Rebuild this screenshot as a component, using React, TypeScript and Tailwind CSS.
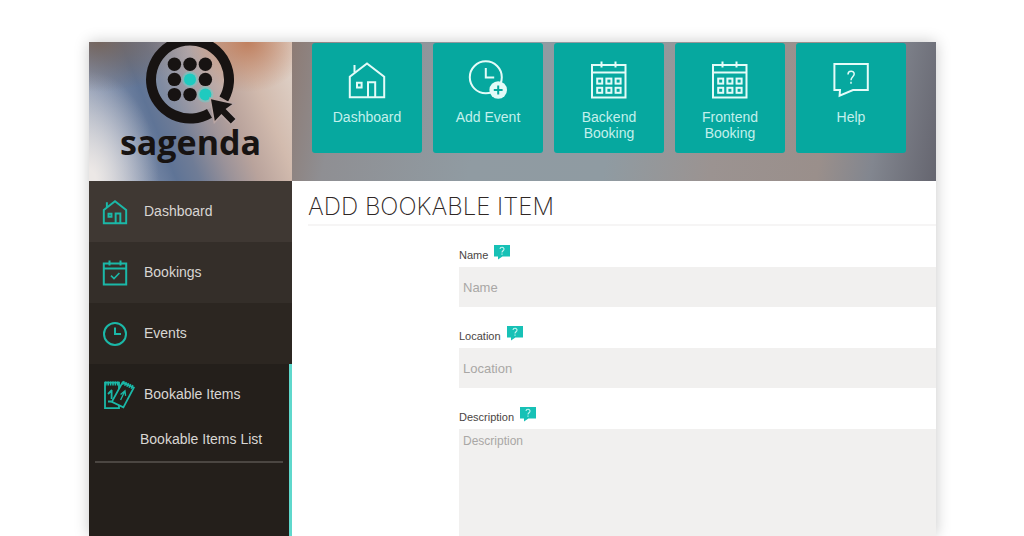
import type { ReactNode } from "react";

function HouseIcon({ className }: { className: string }) {
  return (
    <svg viewBox="0 0 40 40" className={className} fill="none" stroke="currentColor" aria-hidden="true">
      <path d="M2.8 37.2V16.8L20 3.4l17.2 13.4v20.4z" />
      <path d="M7.5 12.5V5" />
      <path d="M21 37V22.2h7.2V37" />
      <path d="M10 22.8h4.6v4.6H10z" />
    </svg>
  );
}

function AddEventIcon({ className }: { className: string }) {
  return (
    <svg viewBox="0 0 40 40" className={className} fill="none" stroke="currentColor" aria-hidden="true">
      <circle cx="17.8" cy="17.3" r="16" />
      <path d="M17.8 8v9.4h8.4" />
      <circle cx="30.2" cy="30" r="8.8" fill="currentColor" stroke="none" />
      <path d="M30.2 25.6v8.8M25.8 30h8.8" stroke="#08a69d" />
    </svg>
  );
}

function CalendarIcon({ className }: { className: string }) {
  return (
    <svg viewBox="0 0 40 40" className={className} fill="none" stroke="currentColor" aria-hidden="true">
      <path d="M3 5h33.5v32.5H3z" />
      <path d="M3 12.4h33.5" />
      <path d="M12.5 1.5v6M26.5 1.5v6" />
      {[18.6, 27.8].map((y) =>
        [8.2, 17.4, 26.6].map((x) => <rect key={`${x}-${y}`} x={x} y={y} width="5" height="5" />)
      )}
    </svg>
  );
}

function HelpIcon({ className }: { className: string }) {
  return (
    <svg viewBox="0 0 40 40" className={className} fill="none" stroke="currentColor" aria-hidden="true">
      <path d="M3.4 4h33.4v26H22L8.6 35.6 9 30H3.4z" />
      <path d="M17 14.4c0-4.2 6.2-4 6.2-.4 0 2.6-3.2 3-3.2 6.2M20 21.8v2" strokeWidth="1.5" />
    </svg>
  );
}

function CheckCalendarIcon({ className }: { className: string }) {
  return (
    <svg viewBox="0 0 32 32" className={className} fill="none" stroke="currentColor" strokeWidth="2" aria-hidden="true">
      <path d="M4.8 6.4h22.4v21H4.8zM4.8 11.6h22.4M10.5 3.4v5M21.5 3.4v5" />
      <path d="M12 18.6l3 3 5.4-5.6" strokeWidth="1.6" />
    </svg>
  );
}

function ClockIcon({ className }: { className: string }) {
  return (
    <svg viewBox="0 0 32 32" className={className} fill="none" stroke="currentColor" strokeWidth="2" aria-hidden="true">
      <circle cx="16" cy="16" r="11" />
      <path d="M16 9.4V16h6" />
    </svg>
  );
}

function TicketsIcon({ className }: { className: string }) {
  return (
    <svg viewBox="0 0 32 32" className={className} fill="none" stroke="currentColor" strokeWidth="1.8" aria-hidden="true">
      <path d="M2 3.6h14v25.6H2z" />
      <path d="M2 4.6h14" strokeWidth="4" strokeDasharray="1.6 0.8" />
      <path d="M5 15l4-4M8.6 11v9M5 22.5h3.4" />
      <path d="M19.6 3.4l11.2 5.2-10.4 19.8-11.6-5.6z" fill="#241f1b" />
      <path d="M19.6 3.6l11 5" strokeWidth="4" strokeDasharray="1.6 0.8" />
      <path d="M17.6 15.4l4.4-3.6.6 5M21.4 13l-3.8 8" strokeWidth="1.3" />
    </svg>
  );
}

function HintIcon() {
  return (
    <svg viewBox="0 0 16 16" className="size-4" aria-hidden="true">
      <path d="M0 1h16v11.4H8.4L4 15.4v-3H0z" fill="#17c1b6" />
      <path d="M6 5c.2-2.4 4.2-2.2 4 .2C9.9 6.8 8 6.8 8 8.6M8 9.6v1.2" fill="none" stroke="#c8f5f0" strokeWidth="1.1" />
    </svg>
  );
}

function LogoMark() {
  return (
    <svg viewBox="0 0 203 82" className="h-[82px] w-[203px]" aria-hidden="true">
      <circle cx="101" cy="37.5" r="35" fill="#ffffff" fillOpacity="0.12" />
      <path d="M134.8 57A39 39 0 1 0 120.5 71.300" fill="none" stroke="#171312" strokeWidth="10" />
      {[22.3, 37.4, 52.6].map((y, row) =>
        [85.4, 101, 116.4].map((x, col) => {
          const lit = row > 0 && row === col;
          return (
            <g key={`${row}-${col}`}>
              {lit && <circle cx={x} cy={y} r="8" fill="#5fd6d0" fillOpacity="0.45" />}
              <circle cx={x} cy={y} r={lit ? 6 : 6.7} fill={lit ? "#1fcabf" : "#171312"} />
            </g>
          );
        })
      )}
      <path
        d="M122 57.2l21.400 4.800-6.800 5 9.800 10-4.600 4.400-9.400-9.400-6.600 7z"
        fill="#171312"
        stroke="#b9a6a4"
        strokeWidth="3"
        paintOrder="stroke"
      />
    </svg>
  );
}

const shortcuts: { label: string; icon: ReactNode }[] = [
  { label: "Dashboard", icon: <HouseIcon className="size-10 stroke-2" /> },
  { label: "Add Event", icon: <AddEventIcon className="size-10 stroke-2" /> },
  { label: "Backend Booking", icon: <CalendarIcon className="size-10 stroke-2" /> },
  { label: "Frontend Booking", icon: <CalendarIcon className="size-10 stroke-2" /> },
  { label: "Help", icon: <HelpIcon className="size-10 stroke-2" /> },
];

const menu: { label: string; icon: ReactNode; tone: string }[] = [
  { label: "Dashboard", icon: <HouseIcon className="size-[26px] stroke-3" />, tone: "bg-[#3f3833]" },
  { label: "Bookings", icon: <CheckCalendarIcon className="size-8" />, tone: "bg-[#342e29]" },
  { label: "Events", icon: <ClockIcon className="size-8" />, tone: "bg-[#2c2621]" },
];

function MenuLink({ label, icon, tone }: { label: string; icon: ReactNode; tone: string }) {
  return (
    <a href="#" className={`flex h-[61px] items-center gap-2 pl-[10px] ${tone}`}>
      <span className="flex w-[37px] justify-start text-[#1bb8a8]">
        <span className="flex min-w-8 justify-center">{icon}</span>
      </span>
      {label}
    </a>
  );
}

function FieldLabel({ id, label }: { id: string; label: string }) {
  return (
    <label htmlFor={id} className="flex h-[23px] items-start gap-[6px] text-[11px] leading-[22px] text-[#4a4543]">
      {label}
      <HintIcon />
    </label>
  );
}

export default function App() {
  return (
    <div className="flex min-h-screen bg-white pt-[42px] pr-[88px] pl-[89px] font-['Liberation_Sans',Arial,sans-serif]">
      <div className="flex min-w-0 flex-1 flex-col bg-white shadow-[0_0_14px_rgba(0,0,0,0.22)]">
        <header className="flex h-[139px] bg-[#8f9196]">
          <div className="flex w-[203px] shrink-0 flex-col items-center overflow-hidden bg-[radial-gradient(ellipse_60px_50px_at_78%_0%,#c0805f_0%,transparent_100%),radial-gradient(ellipse_90px_50px_at_5%_0%,#75665f_0%,transparent_100%),radial-gradient(ellipse_70px_110px_at_0%_100%,#ece8e6_10%,transparent_100%),linear-gradient(68deg,#b4bac6_0%,#8593ae_18%,#5f7496_34%,#6f7c96_43%,#9a9299_55%,#b9a39c_66%,#d2bbae_80%,#e2d6cd_100%)]">
            <LogoMark />
            <span className="font-['Open_Sans','Liberation_Sans',sans-serif] text-[34px] leading-9 font-bold text-[#171312]">
              sagenda
            </span>
          </div>
          <nav
            aria-label="Shortcuts"
            className="flex min-w-0 flex-1 items-start gap-[11px] overflow-hidden bg-[linear-gradient(100deg,#8d7b74_0%,#8f8f93_8%,#909ba2_30%,#8f9ba2_50%,#9b9391_66%,#9a8f8b_82%,#82868f_90%,#65656f_100%)] pt-px pl-5"
          >
            {shortcuts.map(({ label, icon }) => (
              <a
                key={label}
                href="#"
                className="flex h-[110px] w-[110px] shrink-0 flex-col items-center gap-[9px] rounded-[3px] bg-[#06a89f] px-5 pt-[17px] text-center text-[14px] leading-4 text-[#c3f0ec]"
              >
                <span className="text-[#e4fbf8]">{icon}</span>
                {label}
              </a>
            ))}
          </nav>
        </header>

        <div className="flex flex-1">
          <aside className="flex w-[203px] shrink-0 flex-col bg-[#241f1b] text-[14px] text-[#d9d6d3]">
            {menu.map((item) => (
              <MenuLink key={item.label} {...item} />
            ))}
            <div className="flex-1 border-r-[3px] border-[#5fd8cc]">
              <MenuLink label="Bookable Items" icon={<TicketsIcon className="ml-1 size-8" />} tone="bg-[#241f1b]" />
              <div className="mx-[6px] border-b-2 border-[#4b4642] pt-1 pb-3 pl-[45px]">
                <a href="#" className="block leading-5">
                  Bookable Items List
                </a>
              </div>
            </div>
          </aside>

          <main className="flex min-w-0 flex-1 flex-col pl-4">
            <h1 className="border-b-2 border-[#f6f5f5] pt-[9px] font-['Inter','Liberation_Sans',sans-serif] text-[24px] leading-[34px] font-extralight text-[#2f2725]">
              ADD BOOKABLE ITEM
            </h1>
            <form className="flex flex-1 flex-col pt-[18px] pl-[151px]">
              <FieldLabel id="name" label="Name" />
              <input
                id="name"
                type="text"
                placeholder="Name"
                className="mb-[18px] h-10 w-full bg-[#f1f0ef] px-1 text-[13px] outline-none placeholder:text-[#a9a7a5]"
              />
              <FieldLabel id="location" label="Location" />
              <input
                id="location"
                type="text"
                placeholder="Location"
                className="mb-[18px] h-10 w-full bg-[#f1f0ef] px-1 text-[13px] outline-none placeholder:text-[#a9a7a5]"
              />
              <FieldLabel id="description" label="Description" />
              <textarea
                id="description"
                placeholder="Description"
                className="min-h-[107px] w-full flex-1 resize-none bg-[#f1f0ef] px-1 pt-1 text-[12px] leading-4 outline-none placeholder:text-[#a9a7a5]"
              />
            </form>
          </main>
        </div>
      </div>
    </div>
  );
}
